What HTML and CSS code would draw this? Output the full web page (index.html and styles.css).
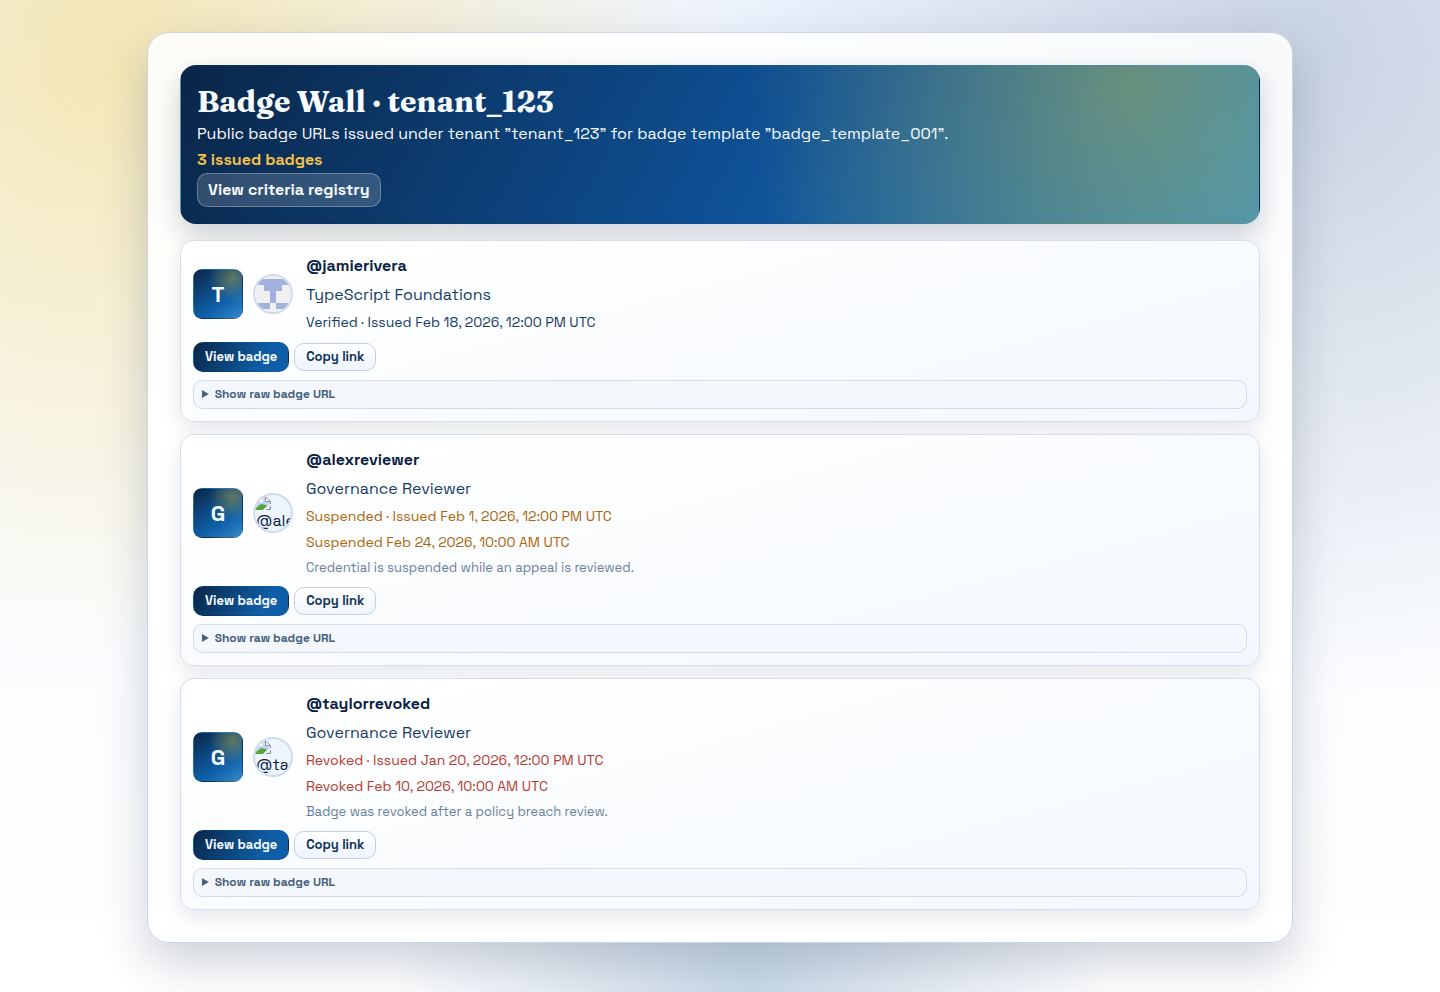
FILE: index.html
```html
<!DOCTYPE html>
<html lang="en">
<head>
  <meta charset="UTF-8" />
  <meta name="viewport" content="width=device-width, initial-scale=1.0" />
  <title>Badge Wall · tenant_123</title>
  <link rel="stylesheet" href="styles.css">
</head>
<body>
  <main class="wall">
    <header class="hero">
      <h1>Badge Wall · tenant_123</h1>
      <p>Public badge URLs issued under tenant ”tenant_123” for badge template ”badge_template_001”.</p>
      <p class="count">3 issued badges</p>
      <a class="registry-link" href="#">View criteria registry</a>
    </header>

    <ul class="badge-list">
      <li class="badge-card">
        <div class="badge-main">
          <span class="badge-tile">T</span>
          <span class="avatar">
            <svg viewBox="0 0 36 36" width="36" height="36" aria-hidden="true">
              <path fill="#f0f0f0" d="M0 0h36v36H0z" />
              <path fill="#a3b1df" d="M3 3h30v6h-6v6h-6v12h-6V15H9V9H3zM3 27h12v6H3zM21 27h12v6H21z" />
            </svg>
          </span>
          <div class="badge-info">
            <p class="recipient">@jamierivera</p>
            <p class="badge-title">TypeScript Foundations</p>
            <p class="meta">Verified · Issued Feb 18, 2026, 12:00 PM UTC</p>
          </div>
        </div>
        <div class="actions">
          <a class="view-btn" href="#">View badge</a>
          <button class="copy-btn" type="button">Copy link</button>
        </div>
        <details class="raw-url">
          <summary>Show raw badge URL</summary>
        </details>
      </li>

      <li class="badge-card">
        <div class="badge-main">
          <span class="badge-tile">G</span>
          <span class="avatar">
            <svg class="missing-icon" viewBox="0 0 16 16" width="16" height="16" aria-hidden="true">
              <path fill="#c3d3f5" d="M0 1h10l5 5v9H0z" />
              <path fill="#fff" d="M2 7a2 2 0 0 1 2-2 2 2 0 0 1 4 1v1zM10 1l5 5h-5z" />
              <path fill="#57a639" d="M0 15l1-2 5-4 5 1 1 1-4 4z" />
              <path fill="#eef5ff" d="M8 15l8-7v3l-5 5H8z" />
              <path fill="none" stroke="#969696" d="M0 1.5h10l5.500 5V9M10.500 2v4.500h5M11 14.500h4.500V11" />
            </svg>
            <span class="avatar-alt">@alexreviewer</span>
          </span>
          <div class="badge-info">
            <p class="recipient">@alexreviewer</p>
            <p class="badge-title">Governance Reviewer</p>
            <p class="meta suspended">Suspended · Issued Feb 1, 2026, 12:00 PM UTC</p>
            <p class="meta suspended">Suspended Feb 24, 2026, 10:00 AM UTC</p>
            <p class="reason">Credential is suspended while an appeal is reviewed.</p>
          </div>
        </div>
        <div class="actions">
          <a class="view-btn" href="#">View badge</a>
          <button class="copy-btn" type="button">Copy link</button>
        </div>
        <details class="raw-url">
          <summary>Show raw badge URL</summary>
        </details>
      </li>

      <li class="badge-card">
        <div class="badge-main">
          <span class="badge-tile">G</span>
          <span class="avatar">
            <svg class="missing-icon" viewBox="0 0 16 16" width="16" height="16" aria-hidden="true">
              <path fill="#c3d3f5" d="M0 1h10l5 5v9H0z" />
              <path fill="#fff" d="M2 7a2 2 0 0 1 2-2 2 2 0 0 1 4 1v1zM10 1l5 5h-5z" />
              <path fill="#57a639" d="M0 15l1-2 5-4 5 1 1 1-4 4z" />
              <path fill="#eef5ff" d="M8 15l8-7v3l-5 5H8z" />
              <path fill="none" stroke="#969696" d="M0 1.5h10l5.500 5V9M10.500 2v4.500h5M11 14.500h4.500V11" />
            </svg>
            <span class="avatar-alt">@taylorrevoked</span>
          </span>
          <div class="badge-info">
            <p class="recipient">@taylorrevoked</p>
            <p class="badge-title">Governance Reviewer</p>
            <p class="meta revoked">Revoked · Issued Jan 20, 2026, 12:00 PM UTC</p>
            <p class="meta revoked">Revoked Feb 10, 2026, 10:00 AM UTC</p>
            <p class="reason">Badge was revoked after a policy breach review.</p>
          </div>
        </div>
        <div class="actions">
          <a class="view-btn" href="#">View badge</a>
          <button class="copy-btn" type="button">Copy link</button>
        </div>
        <details class="raw-url">
          <summary>Show raw badge URL</summary>
        </details>
      </li>
    </ul>
  </main>
</body>
</html>
```
FILE: styles.css
```css
* {
  box-sizing: border-box;
}

body {
  margin: 0;
  padding: 32px 16px 48px;
  min-height: 100vh;
  font-family: "Space Grotesk", Inter, "Liberation Sans", sans-serif;
  font-size: 16px;
  line-height: 26px;
  color: #0a2043;
  background:
    radial-gradient(ellipse 620px 600px at 8% 6%, rgba(250, 215, 95, 0.46), rgba(250, 215, 95, 0) 100%),
    radial-gradient(ellipse 600px 620px at 90% 8%, rgba(15, 50, 90, 0.18), rgba(15, 50, 90, 0) 100%),
    radial-gradient(ellipse 360px 400px at 52% 100%, rgba(15, 85, 150, 0.22), rgba(15, 85, 150, 0) 100%),
    linear-gradient(180deg, #eff5ff 0%, #fafcff 60%, #ffffff 100%);
}

h1,
p {
  margin: 0;
}

.wall {
  max-width: 1146px;
  margin: 0 auto;
  padding: 32px;
  border: 1px solid #cbd5e1;
  border-radius: 22px;
  background: linear-gradient(180deg, rgba(255, 255, 255, 0.88), #ffffff 60%);
  box-shadow: 0 20px 48px rgba(10, 32, 67, 0.2);
}

.hero {
  display: flex;
  flex-direction: column;
  align-items: flex-start;
  margin-bottom: 16px;
  padding: 16px;
  border: 1px solid transparent;
  border-radius: 16px;
  color: #f8fcff;
  background:
    radial-gradient(circle at 88% 12%, rgba(215, 185, 40, 0.38), rgba(215, 185, 40, 0) 40%),
    linear-gradient(120deg, #0a2648 0%, #0e5196 54%, #3490c6 100%);
  box-shadow: 0 12px 28px rgba(10, 32, 67, 0.2);
}

.hero h1 {
  font-family: Fraunces, "Liberation Serif", serif;
  font-size: 30px;
  font-weight: 700;
  line-height: 39px;
}

.hero .count {
  color: #f5c04a;
  font-weight: 700;
}

.registry-link {
  padding: 3px 10px;
  border: 1px solid rgba(255, 255, 255, 0.28);
  border-radius: 10px;
  background: rgba(255, 255, 255, 0.16);
  color: #f8fcff;
  font-weight: 700;
  text-decoration: none;
}

.badge-list {
  display: grid;
  gap: 12px;
  margin: 0;
  padding: 0;
  list-style: none;
}

.badge-card {
  display: grid;
  gap: 8px;
  padding: 12px;
  border: 1px solid #d5deea;
  border-radius: 14px;
  background: linear-gradient(165deg, #ffffff 10%, #f3f8fe 100%);
  box-shadow: 0 8px 20px rgba(10, 32, 67, 0.1);
}

.badge-main {
  display: flex;
  align-items: center;
  gap: 10px;
}

.badge-tile {
  display: grid;
  place-items: center;
  flex: none;
  width: 50px;
  height: 50px;
  border: 1px solid transparent;
  border-radius: 9px;
  color: #f8fcff;
  font-size: 22px;
  font-weight: 700;
  background:
    radial-gradient(circle at 80% 16%, rgba(215, 185, 40, 0.4), rgba(215, 185, 40, 0) 42%),
    linear-gradient(145deg, #0a2648 0%, #0f5fa8 64%, #3488ca 100%);
}

.avatar {
  flex: none;
  width: 40px;
  height: 40px;
  overflow: hidden;
  border: 2px solid #cfdced;
  border-radius: 50%;
  background: #eef5ff;
}

.avatar svg {
  display: block;
}

.avatar-alt {
  display: block;
  width: 44px;
  padding-left: 1px;
  line-height: 20px;
  word-break: break-all;
}

.badge-info {
  display: grid;
  gap: 3px;
  padding-left: 3px;
}

.recipient {
  font-weight: 700;
}

.badge-title {
  color: #173b63;
}

.meta {
  color: #173b63;
  font-size: 14px;
  line-height: 23px;
}

.suspended {
  color: #a9660b;
}

.revoked {
  color: #b43a32;
}

.reason {
  color: #6a819d;
  font-size: 13px;
  line-height: 21px;
}

.actions {
  display: flex;
  align-items: center;
  gap: 5px;
}

.view-btn,
.copy-btn {
  border-radius: 10px;
  font-family: inherit;
  font-size: 13px;
  font-weight: 700;
}

.view-btn {
  padding: 4px 11px;
  border: 1px solid transparent;
  color: #f8fcff;
  line-height: 20px;
  text-decoration: none;
  background: linear-gradient(120deg, #0a2648 0%, #0f5fa8 75%);
}

.copy-btn {
  padding: 3px 11px;
  border: 1px solid #c3cfdf;
  color: #123256;
  line-height: 20px;
  background: linear-gradient(180deg, #ffffff, #eef5ff);
}

.raw-url {
  padding: 3px 8px;
  border: 1px solid #d2dce8;
  border-radius: 9px;
  background: #f4f7fc;
}

.raw-url summary {
  color: #466180;
  font-size: 12px;
  font-weight: 700;
  line-height: 21px;
}
```
